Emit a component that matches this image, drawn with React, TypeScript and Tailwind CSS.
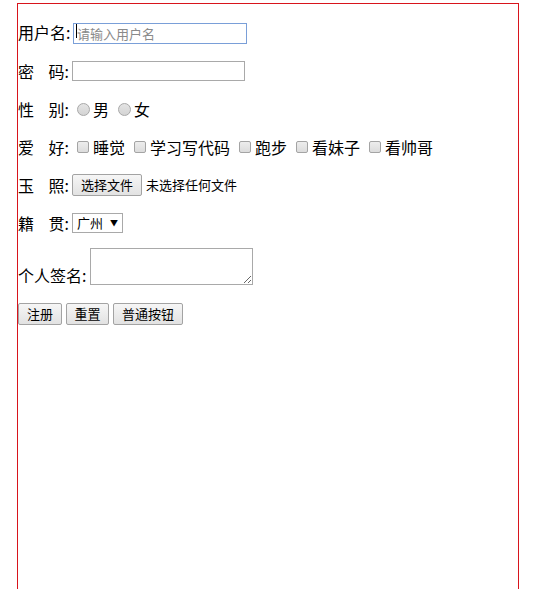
import React from 'react';

const FONT = { fontFamily: '"Microsoft YaHei", "Noto Sans CJK SC", "Noto Sans", sans-serif' };

function Label({ first, second }: { first: string; second?: string }) {
  // two-character labels are padded so the colon lines up with 用户名:
  if (second) {
    return (
      <span className="inline-flex w-[51px] shrink-0 whitespace-nowrap text-[16px] leading-[22px] text-black">
        <span className="inline-block w-[31px]">{first}</span>
        {second}:
      </span>
    );
  }
  return <span className="w-[51px] shrink-0 whitespace-nowrap text-[16px] leading-[22px] text-black">{first}:</span>;
}

function Radio({ text }: { text: string }) {
  return (
    <span className="flex items-center">
      <span className="ml-[5px] mr-[3px] h-[13px] w-[13px] rounded-full border border-[#a8a8a8] bg-gradient-to-b from-[#e4e4e4] to-[#d4d4d4]" />
      <span className="whitespace-nowrap text-[16px] leading-[22px] text-black">{text}</span>
    </span>
  );
}

function Check({ text }: { text: string }) {
  return (
    <span className="flex items-center">
      <span className="ml-[5px] mr-[4px] h-[12px] w-[12px] rounded-[2px] border border-[#a4a4a4] bg-gradient-to-b from-[#ededed] to-[#dcdcdc]" />
      <span className="whitespace-nowrap text-[16px] leading-[22px] text-black">{text}</span>
    </span>
  );
}

function Btn({ text, w }: { text: string; w: string }) {
  return (
    <button
      type="button"
      className={`${w} h-[22px] whitespace-nowrap rounded-[2px] border border-[#a3a3a3] bg-gradient-to-b from-[#f6f6f6] to-[#e2e2e2] text-[13px] leading-[20px] text-black`}
    >
      {text}
    </button>
  );
}

export default function App() {
  const hobbies = ['睡觉', '学习写代码', '跑步', '看妹子', '看帅哥'];

  return (
    <div className="h-[589px] overflow-hidden bg-white pl-[17px] pt-[3px]" style={FONT}>
      <form className="flex h-[600px] w-[502px] flex-col border-solid border-l border-r border-t border-l-[#d8141c] border-r-[#d8141c] border-t-[#d8141c] pt-[17px]">
        {/* 用户名 */}
        <div className="flex h-[22px] items-center">
          <Label first="用户名" />
          <div className="relative ml-[4px]">
            <input
              className="h-[21px] w-[174px] border border-[#7a9fd8] px-[3px] text-[13px] outline-none placeholder:text-[#8a8a8a]"
              placeholder="请输入用户名"
            />
            <span className="absolute left-[3px] top-[4px] h-[14px] w-px bg-black" />
          </div>
        </div>

        {/* 密码 */}
        <div className="mt-[17px] flex h-[22px] items-center">
          <Label first="密" second="码" />
          <input type="password" className="ml-[3px] h-[20px] w-[173px] border border-[#a9a9a9] outline-none" />
        </div>

        {/* 性别 */}
        <div className="mt-[16px] flex h-[22px] items-center">
          <Label first="性" second="别" />
          <span className="ml-[3px] flex items-center gap-[4px]">
            <Radio text="男" />
            <Radio text="女" />
          </span>
        </div>

        {/* 爱好 */}
        <div className="mt-[16px] flex h-[22px] items-center">
          <Label first="爱" second="好" />
          <span className="ml-[3px] flex items-center gap-[4px]">
            {hobbies.map((h) => (
              <Check key={h} text={h} />
            ))}
          </span>
        </div>

        {/* 玉照 */}
        <div className="mt-[16px] flex h-[22px] items-center">
          <Label first="玉" second="照" />
          <Btn text="选择文件" w="ml-[3px] w-[70px]" />
          <span className="ml-[4px] whitespace-nowrap text-[13px] text-black">未选择任何文件</span>
        </div>

        {/* 籍贯 */}
        <div className="mt-[16px] flex h-[22px] items-center">
          <Label first="籍" second="贯" />
          <span className="ml-[3px] flex h-[20px] w-[51px] items-center whitespace-nowrap border border-[#a9a9a9] bg-white pl-[4px] text-[13px] text-black">
            广州
            <span className="ml-[7px] text-[8px] leading-none">▼</span>
          </span>
        </div>

        {/* 个人签名 */}
        <div className="mt-[14px] flex items-end">
          <span className="w-[68px] shrink-0 whitespace-nowrap text-[16px] leading-[20px] text-black">个人签名:</span>
          <textarea className="ml-[4px] h-[37px] w-[163px] border border-[#a9a9a9] outline-none" />
        </div>

        {/* 按钮 */}
        <div className="mt-[18px] flex items-center gap-[4px]">
          <Btn text="注册" w="w-[44px]" />
          <Btn text="重置" w="w-[43px]" />
          <Btn text="普通按钮" w="w-[70px]" />
        </div>
      </form>
    </div>
  );
}
